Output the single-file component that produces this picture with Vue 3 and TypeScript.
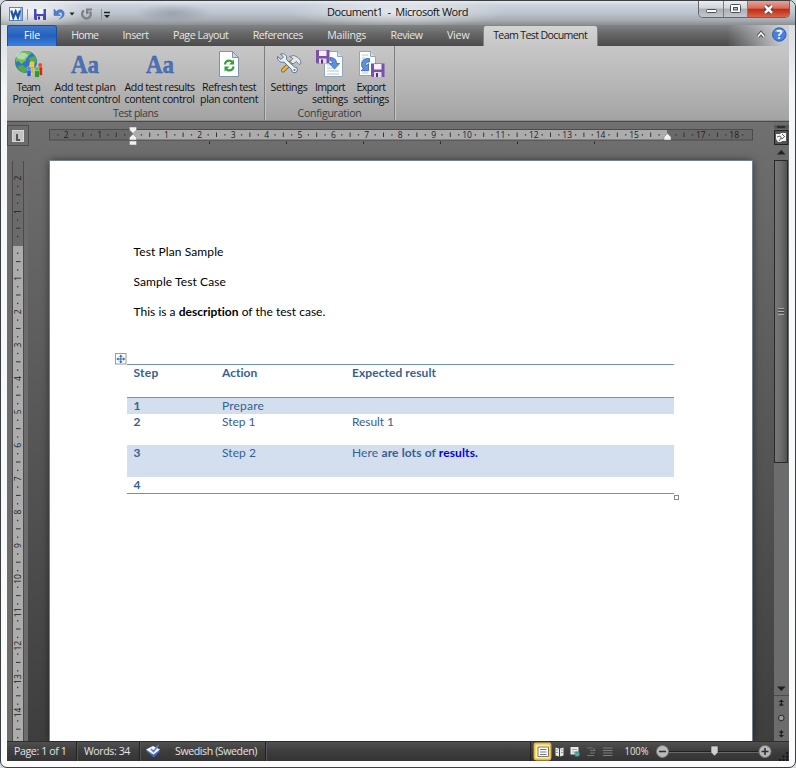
<template>
  <div class="window">
    <header class="title-bar">
      <svg class="quick" width="115" height="24" viewBox="0 0 115 24">
        <rect x="8.500" y="6.500" width="13" height="13" fill="#f6f9fd" stroke="#5d86bd" />
        <path d="M19 7h2v12h-2" fill="#8fb0dc" />
        <path d="M10.300 9.500 L12.300 16.500 L14.700 10.500 L17 16.500 L19 9.500" fill="none" stroke="#1c57a5" stroke-width="2.200" />
        <path d="M26.500 8v11M100.500 8v11" stroke="#8d9299" />
        <path d="M33 8h12v11h-11l-1-1z" fill="#4a48b8" />
        <path d="M35.500 8h7v5h-7z" fill="#f3f4ff" />
        <path d="M36 15h6v4h-6z" fill="#dfe1f5" />
        <path d="M37 15.500h2v3h-2z" fill="#33329a" />
        <path d="M53 8v6.500h6.500L57 12.200c2-1.800 4.200-.8 4.200 1.300 0 1.800-1 3-3 4.500 3.500-1 5-3 5-5.300 0-4-4.600-5.400-8-2.300z" fill="#4b7fd0" stroke="#3566b4" stroke-width=".5" />
        <path d="M68.500 11.500h5l-2.500 3z" fill="#222" />
        <path d="M83 9.500a4.300 4.300 0 1 0 6 1.200" fill="none" stroke="#7d8084" stroke-width="2.400" />
        <path d="M85 7.500h6v2h-3.500v3.500H85z" fill="#7d8084" />
        <path d="M103 11.500h6" stroke="#222" stroke-width="1.300" />
        <path d="M103 14h6l-3 3z" fill="#222" />
      </svg>
      <div class="caption"><span v-fit="141">Document1&nbsp; -&nbsp; Microsoft Word</span></div>
      <div class="controls">
        <span class="control">
          <svg width="24" height="16" viewBox="0 0 24 16"><rect x="7.500" y="8.500" width="10" height="3" rx="1" fill="#fff" stroke="#4c4f56" /></svg>
        </span>
        <span class="control">
          <svg width="23" height="16" viewBox="0 0 23 16">
            <rect x="6.500" y="3.500" width="10" height="8" rx="1" fill="#fff" stroke="#4c4f56" />
            <rect x="9.500" y="6.500" width="4" height="2.500" fill="#b4b8c0" stroke="#4c4f56" />
          </svg>
        </span>
        <span class="control close">
          <svg width="41" height="16" viewBox="0 0 41 16">
            <path d="M17.200 5l6.600 6.500M23.800 5l-6.600 6.500" stroke="#60454a" stroke-width="4.600" />
            <path d="M17 4.800l7 7M24 4.800l-7 7" stroke="#fff" stroke-width="2.500" />
          </svg>
        </span>
      </div>
    </header>

    <nav class="tabs">
      <a class="tab file"><span v-fit="16">File</span></a>
      <a v-for="tab in tabs" :key="tab.label" class="tab" :class="{ active: tab.active }">
        <span v-fit="tab.width">{{ tab.label }}</span>
      </a>
      <svg class="help" width="34" height="21" viewBox="0 0 34 21">
        <path d="M3 11.500L6 8l3 3.500" fill="none" stroke="#555" stroke-width="3.600" />
        <path d="M3 11.500L6 8l3 3.500" fill="none" stroke="#fff" stroke-width="1.600" />
        <circle cx="24.300" cy="9.500" r="6.700" fill="#4a80dc" stroke="#2d5cae" />
        <path d="M19 7a6 5 0 0 1 10.600 0q-5-2-10.600 0" fill="#8fb5f0" />
        <text x="24.300" y="14" text-anchor="middle" class="question">?</text>
      </svg>
    </nav>

    <section class="ribbon">
      <div class="group plans">
        <div class="buttons">
          <button class="team">
            <svg width="32" height="30" viewBox="12 49 32 30">
              <circle cx="26" cy="62" r="11" fill="#2e78c2" />
              <path d="M16.500 57q4-6 10-6l5 2-3 3-4 1 2 3-5 4-3-3-3 1z" fill="#70bd55" />
              <path d="M29 58l6-2 2 6-6 3zM18 66l5-1 4 4-2 4q-5-1-7-5z" fill="#58a845" />
              <ellipse cx="22" cy="56" rx="6" ry="3.500" fill="#fff" opacity=".45" />
              <g stroke="#fff" stroke-width=".3">
                <path d="M29.500 65h4.500v9h-4.500z" fill="#f0ad17" /><circle cx="32" cy="63.800" r="2.300" fill="#f7c331" />
                <path d="M38 66h4.500v9.500h-4.500z" fill="#cf2718" /><circle cx="40.200" cy="65" r="2.300" fill="#e64a32" />
                <path d="M27 69.500h4v7h-4z" fill="#2a5fd0" /><circle cx="29" cy="68.500" r="2.100" fill="#4d83e8" />
                <path d="M34.500 70h5v7.500h-5z" fill="#2f9c33" /><circle cx="37" cy="68.700" r="2.300" fill="#52c254" />
              </g>
            </svg>
            <span v-fit="23">Team</span><span v-fit="31">Project</span>
          </button>
          <button class="plan">
            <svg width="32" height="30" viewBox="0 0 32 30"><text x="2" y="23.500" class="aa" textLength="28" lengthAdjust="spacingAndGlyphs">Aa</text></svg>
            <span v-fit="61">Add test plan</span><span v-fit="70">content control</span>
          </button>
          <button class="results">
            <svg width="32" height="30" viewBox="0 0 32 30"><text x="2" y="23.500" class="aa" textLength="28" lengthAdjust="spacingAndGlyphs">Aa</text></svg>
            <span v-fit="70">Add test results</span><span v-fit="70">content control</span>
          </button>
          <button class="refresh">
            <svg width="32" height="30" viewBox="213 49 32 30">
              <path d="M219.500 51.500h13l6 6v19h-19z" fill="#fbfdff" stroke="#7e93ac" />
              <path d="M232.500 51.500v6h6z" fill="#c9d8e8" stroke="#7e93ac" />
              <path d="M225 64.500q.5-4 4.500-3.800 1.500 0 2.700 1.200M233.500 66.500q-.5 4-4.500 3.800-1.500 0-2.700-1.200" fill="none" stroke="#38a03a" stroke-width="2.200" />
              <path d="M234 59.500v5h-5zM224.500 71.500v-5h5z" fill="#38a03a" />
            </svg>
            <span v-fit="54">Refresh test</span><span v-fit="58">plan content</span>
          </button>
        </div>
        <div class="group-label"><span v-fit="45">Test plans</span></div>
      </div>
      <div class="group config">
        <div class="buttons">
          <button>
            <svg width="32" height="30" viewBox="273 49 32 30">
              <path d="M283 70.500l8.500-8.500" stroke="#8c6519" stroke-width="4" stroke-linecap="round" />
              <path d="M283 70.500l8-8" stroke="#f0bd45" stroke-width="2.400" stroke-linecap="round" />
              <path d="M290 61.500l3-3-3.500-2q4.500-2.500 8.500 1l2.500 3 .5 3-2 1-2.500-3-3.500 2.500z" fill="#e4e9ef" stroke="#5d6b7b" stroke-width=".8" />
              <path d="M277.500 56.500l3.500 3 2.500-2.500-3-3c4-1 7 1.500 6 5.500l8 7.500q3 0 3 3-.5 3-3.500 2.800-2.500-.3-2.500-3.300l-7.500-7.500c-3.500 1-7-1.500-6.500-5.500z" fill="#e9f0f7" stroke="#4f6a8a" stroke-width=".9" />
              <circle cx="294.500" cy="70" r="1" fill="#4f6a8a" />
            </svg>
            <span v-fit="37">Settings</span>
          </button>
          <button>
            <svg width="32" height="30" viewBox="314 49 32 30">
              <path d="M324.500 51.500h13l5 5v20h-18z" fill="#fbfdff" stroke="#91a6bd" />
              <path d="M337.500 51.500v5h5" fill="#d2dfec" stroke="#91a6bd" />
              <path d="M327 65h5M327 68h6M327 71h12M327 74h12" stroke="#b9c6d5" />
              <path d="M316 50h13.500v13.500h-12.500l-1-1z" fill="#7951a8" />
              <path d="M319 50.500h7.500v5.500h-7.500z" fill="#f4effa" />
              <path d="M319 58.500h7.500v5h-7.500z" fill="#e4dbf0" /><path d="M321 59.500h2v4h-2z" fill="#55317f" />
              <path d="M330 57.500q6.500 0 6.500 6h3l-5 5.500-5-5.500h3.200q0-3-2.700-3z" fill="#5891e4" stroke="#2e61b5" stroke-width=".8" />
            </svg>
            <span v-fit="30">Import</span><span v-fit="36">settings</span>
          </button>
          <button>
            <svg width="32" height="30" viewBox="354 49 32 30">
              <path d="M358.500 51.500h11l5 5v19h-16z" fill="#fbfdff" stroke="#91a6bd" />
              <path d="M369.500 51.500v5h5" fill="#d2dfec" stroke="#91a6bd" />
              <path d="M361 55h6M361 58h3M361 73h6" stroke="#b9c6d5" />
              <path d="M368.500 58.500q-8-.5-8 6 0 2.500 1.700 4l-2 2.200h7.300v-7l-2.200 2.100q-2.300-3.600 3.200-3.800z" fill="#5891e4" stroke="#2e61b5" stroke-width=".8" />
              <path d="M370 63.500h13.500v13.500h-12.500l-1-1z" fill="#7951a8" />
              <path d="M373 64h7.500v5.500h-7.500z" fill="#f4effa" />
              <path d="M373 72h7.500v5h-7.500z" fill="#e4dbf0" /><path d="M375 73h2v4h-2z" fill="#55317f" />
            </svg>
            <span v-fit="29">Export</span><span v-fit="36">settings</span>
          </button>
        </div>
        <div class="group-label"><span v-fit="64">Configuration</span></div>
      </div>
    </section>

    <main class="workspace">
      <div class="left-strip">
        <div class="corner"><i></i></div>
        <svg width="21" height="580" viewBox="7 161 21 580">
          <rect x="12.500" y="160.500" width="11" height="590" fill="#6b6b6b" stroke="#4b4b4b" />
          <rect x="13" y="246" width="10" height="500" fill="#acacac" />
          <g v-for="m in verticalMarks" :key="m.at">
            <text v-if="m.kind === 'number'" class="num" text-anchor="middle" :transform="`translate(21.200 ${m.at}) rotate(-90)`">{{ m.label }}</text>
            <rect v-else-if="m.kind === 'half'" x="16" :y="m.at - 0.500" width="4.500" height="1" fill="#333" />
            <rect v-else x="17" :y="m.at - 0.600" width="1.300" height="1.300" fill="#333" />
          </g>
        </svg>
      </div>

      <div class="canvas">
        <svg width="746" height="39" viewBox="28 122 746 39">
          <rect x="49.500" y="129.500" width="703" height="10.500" fill="#696969" stroke="#4b4b4b" />
          <rect x="133" y="130" width="534" height="9.500" fill="#acacac" />
          <g v-for="m in horizontalMarks" :key="m.at">
            <text v-if="m.kind === 'number'" class="num" text-anchor="middle" :x="m.at" y="138">{{ m.label }}</text>
            <rect v-else-if="m.kind === 'half'" :x="m.at - 0.500" y="132.500" width="1" height="4.500" fill="#333" />
            <rect v-else :x="m.at - 0.600" y="134.200" width="1.300" height="1.300" fill="#333" />
          </g>
          <rect v-for="n in 6" :key="n" :x="132 + n * 77" y="141.500" width="1" height="2.500" fill="#2b2b2b" />
          <g fill="#f1f1f1" stroke="#777" stroke-width=".5">
            <path d="M129.500 127h7v3l-3.500 3.500-3.500-3.500z" />
            <path d="M133 134l3.500 3.500v2.500h-7v-2.500z" />
            <path d="M129.500 141h7v4h-7z" />
            <path d="M667.500 133.500l3.500 3.500v3h-7v-3z" />
          </g>
        </svg>

        <article class="page">
          <p><span v-fit="90">Test Plan Sample</span></p>
          <p><span v-fit="92.500">Sample Test Case</span></p>
          <p><span v-fit="192">This is a <b>description</b> of the test case.</span></p>
          <div class="table-wrap">
            <svg class="move" width="12" height="12" viewBox="0 0 12 12">
              <rect x=".5" y=".5" width="10.500" height="10.500" fill="#fff" stroke="#9a9a9a" />
              <path d="M5.800 3v6M2.800 6h6" stroke="#3563b8" />
              <path d="M5.800 1.500L7.600 3.700H4zM5.800 10.500L7.600 8.300H4zM1.300 6l2.200-1.800v3.600zM10.300 6L8.100 4.200v3.600z" fill="#3563b8" />
            </svg>
            <table>
              <thead>
                <tr>
                  <th><span v-fit="25">Step</span></th>
                  <th><span v-fit="35.500">Action</span></th>
                  <th><span v-fit="84">Expected result</span></th>
                </tr>
              </thead>
              <tbody>
                <tr v-for="row in rows" :key="row.step" :class="row.size">
                  <th>{{ row.step }}</th>
                  <td><span v-if="row.action" v-fit="row.actionWidth">{{ row.action }}</span></td>
                  <td>
                    <span v-if="row.result" v-fit="42">{{ row.result }}</span>
                    <span v-if="row.step === 3" v-fit="126">Here <b>are lots of <em>results.</em></b></span>
                  </td>
                </tr>
              </tbody>
            </table>
            <i class="resize"></i>
          </div>
        </article>
      </div>

      <aside class="scroll">
        <svg width="15" height="38" viewBox="774 122 15 38">
          <rect x="774.500" y="125" width="14" height="4" fill="#555" />
          <path d="M777 127h8" stroke="#222" stroke-width="1.500" />
          <rect x="774.500" y="130.500" width="13.500" height="14" fill="#555" stroke="#222" />
          <path d="M776 134h4l1-1h5v8h-4l-1 1h-3l-2-3z" fill="#f4f4f4" />
          <path d="M777 137l3-1 2 3 3-3M779 141l2-3M782 134l2 2" stroke="#6c6268" fill="none" />
          <path d="M777 154.500l4.300-4.500 4.300 4.500z" fill="#222" />
        </svg>
        <div class="thumb"><i></i></div>
        <svg class="scroll-end" width="15" height="61" viewBox="774 680 15 61">
          <path d="M777 686.500h8.500l-4.200 4.500z" fill="#1f1f1f" />
          <path d="M774 695.500h15" stroke="#4b4b4b" />
          <path d="M778.500 702l2.800-2.500 2.800 2.500zM778.500 705.500l2.800-2.500 2.800 2.500zM778.500 731.500h5.600l-2.800 2.500zM778.500 735h5.600l-2.800 2.500z" fill="#1f1f1f" />
          <path d="M781.300 701v5M781.300 730v5" stroke="#1f1f1f" />
          <circle cx="781.300" cy="718" r="2.800" fill="#999" stroke="#2a2a2a" />
        </svg>
      </aside>
    </main>

    <footer class="status">
      <div class="cell page-no"><span v-fit="52.500">Page: 1 of 1</span></div>
      <div class="cell words"><span v-fit="46">Words: 34</span></div>
      <div class="cell language">
        <svg width="16" height="16" viewBox="147 743 16 16">
          <path d="M146 751l6-3.500 8 3.500-6 6.500z" fill="#3f68c9" />
          <path d="M146 749.500l7-3.500 7 3.500-6.500 5z" fill="#f5f7fc" />
          <path d="M151 749l2.500 2.500 5-6.500" fill="none" stroke="#4d7de0" stroke-width="1.600" />
        </svg>
        <span v-fit="82">Swedish (Sweden)</span>
      </div>
      <div class="views">
        <svg width="258" height="20" viewBox="531 742 258 20">
          <rect x="534.500" y="743.500" width="16" height="16" rx="1.500" fill="#fff0a8" stroke="#e8b93a" stroke-width="1.800" />
          <path d="M538 747h10.500v9.500H538z" fill="#fff" stroke="#777" />
          <path d="M540 749.500h6.500M540 752h6.500M540 754.500h6.500" stroke="#777" />
          <path d="M555.500 747.500l3.500 1v8l-3.500-1zM563.500 747.500l-3.500 1v8l3.500-1z" fill="#e8e8e8" />
          <path d="M556 750h2M556 752.500h2M561 750h2M561 752.500h2" stroke="#888" stroke-width=".8" />
          <path d="M570.500 747h8v7.500h-8z" fill="#e8e8e8" /><path d="M572 749.500h5M572 752h4" stroke="#aaa" />
          <circle cx="577" cy="754" r="2.700" fill="#3a97ba" /><path d="M575 753l2 2 2-1" stroke="#7cc465" fill="none" />
          <path d="M587 748h5M590 750.500h5M590 753h5M587 755.500h7M592.500 748l3 2" stroke="#757575" fill="none" />
          <path d="M603 748h9.500M603 750.500h9.500M603 753h9.500M603 755.500h9.500" stroke="#7d7d7d" />
          <text x="624.500" y="755" class="zoom-text" textLength="24" lengthAdjust="spacingAndGlyphs">100%</text>
          <path d="M669 751.500h90" stroke="#202020" /><path d="M669 752.500h90" stroke="#686868" />
          <path d="M711 746h7v6.500l-3.500 3.500-3.500-3.500z" fill="#d0d0d0" stroke="#333" stroke-width=".6" />
          <circle cx="662.500" cy="751.500" r="6" fill="#b9b9b9" stroke="#777" />
          <circle cx="765" cy="751.500" r="6" fill="#b9b9b9" stroke="#777" />
          <path d="M659 751.500h7M761.500 751.500h7M765 748v7" stroke="#2d2d2d" stroke-width="1.600" />
          <path d="M786 752h2v2h-2zM786 755.500h2v2h-2zM786 759h2v2h-2zM782.500 755.500h2v2h-2zM782.500 759h2v2h-2zM779 759h2v2h-2z" fill="#171717" />
        </svg>
      </div>
    </footer>
  </div>
</template>

<script setup lang="ts">
type Tab = { label: string, width: number, active?: boolean }

type Row = {
  step: number,
  action?: string,
  actionWidth?: number,
  result?: string,
  size?: "tall" | "taller"
}

type Mark = { at: number, kind: "number" | "half" | "quarter", label: string }

// Spreads or tightens a label's letters so that it takes the given width.
const vFit = {
  mounted(el: HTMLElement, { value }: { value: number }) {
    const natural = el.getBoundingClientRect().width
    const count = (el.textContent ?? "").length
    el.style.letterSpacing = `${(value - natural) / count}px`
  }
}

const tabs: Tab[] = [
  { label: "Home", width: 27 },
  { label: "Insert", width: 26 },
  { label: "Page Layout", width: 55.500 },
  { label: "References", width: 50 },
  { label: "Mailings", width: 39 },
  { label: "Review", width: 32 },
  { label: "View", width: 22.500 },
  { label: "Team Test Document", width: 94, active: true }
]

const rows: Row[] = [
  { step: 1, action: "Prepare", actionWidth: 42 },
  { step: 2, action: "Step 1", actionWidth: 33.500, result: "Result 1", size: "tall" },
  { step: 3, action: "Step 2", actionWidth: 34, size: "taller" },
  { step: 4 }
]

// One centimetre of the ruler, split in quarters.
const CM = 33.4

function marks(origin: number, from: number, to: number, skip: number[]): Mark[] {
  const list: Mark[] = []
  for (let q = from; q <= to; q++) {
    if (skip.includes(q)) continue
    const rest = Math.abs(q) % 4
    list.push({
      at: origin + q * CM / 4,
      kind: rest === 0 ? "number" : rest === 2 ? "half" : "quarter",
      label: String(Math.abs(q) / 4)
    })
  }
  return list
}

const horizontalMarks = marks(133, -9, 73, [0, 64])
const verticalMarks = marks(244.900, -8, 59, [0])
</script>

<style>
body {
  background: #d5dade;
  overflow: hidden;
}
</style>

<style scoped>
* {
  box-sizing: border-box;
}

.window {
  width: 796px;
  height: 768px;
  display: flex;
  flex-direction: column;
  padding: 0 6px 6px;
  border: 1px solid #3b3e42;
  border-radius: 7px;
  overflow: hidden;
  background: linear-gradient(#dfe4ea 0, #d9dee5 25px, #f4f6f8 90px, #fbfbfb 100%);
  font: 10.6px/12px "Open Sans", "Noto Sans", sans-serif;
  color: #1e1e1e;
}

span {
  display: inline-block;
  white-space: nowrap;
}

svg {
  display: block;
  flex: none;
}

.title-bar {
  height: 24px;
  flex: none;
  display: flex;
  margin: 0 -6px;
  padding: 0 5px 0 0;
  background:
    radial-gradient(ellipse 38px 9px at 172px 12px, rgba(105, 115, 130, .4), transparent),
    radial-gradient(ellipse 110px 16px at 396px 11px, rgba(255, 255, 255, .6), transparent),
    radial-gradient(ellipse 60px 20px at 30px 11px, rgba(255, 255, 255, .8), transparent),
    linear-gradient(#e5e9ee 0, #cbd2dc 4px, #bcc4ce 12px, #a7adb3 19px, #8c8f92 24px);
}

.caption {
  flex: 1;
  padding: 5px 0 0 211px;
  font-size: 11px;
  color: #111;
}

.controls {
  display: flex;
  height: 17px;
  border: 1px solid #62666e;
  border-top: 0;
  border-radius: 0 0 5px 5px;
  overflow: hidden;
}

.control {
  background: linear-gradient(#eceef1, #d0d3d8 45%, #aaaeb5 50%, #c4c8ce);
  border-right: 1px solid #777b82;
}

.control.close {
  border: 0;
  background: linear-gradient(#e8a498, #d66a58 45%, #bd2d15 52%, #d9634a);
}

.tabs {
  height: 21px;
  flex: none;
  display: flex;
  background: linear-gradient(90deg, transparent 720px, rgba(225, 228, 232, .8) 775px), linear-gradient(#818385, #666 9px, #4b4b4b);
}

.tab {
  display: flex;
  justify-content: center;
  padding: 4px 12.2px 0;
  color: #e6e6e6;
}

.tab.file {
  width: 50px;
  margin-right: 2px;
  color: #fff;
  background: linear-gradient(#3f78c9, #2360bd 50%, #3b80df);
  border: 1px solid #1c4f9d;
  border-bottom: 0;
  border-radius: 3px 3px 0 0;
  padding-top: 3px;
}

.tab.active {
  width: 115px;
  padding: 3px 0 0;
  margin-left: 1px;
  color: #1c1c1c;
  background: linear-gradient(#d4d4d4, #c6c6c6);
  border: 1px solid #858585;
  border-bottom: 0;
  border-radius: 3px 3px 0 0;
}

.help {
  margin-left: auto;
}

.question {
  font: bold 12px "Open Sans", sans-serif;
  fill: #fff;
}

.ribbon {
  height: 75px;
  flex: none;
  display: flex;
  background: linear-gradient(#c7c7c7, #b5b5b5 55%, #a3a3a3);
  border-bottom: 1px solid #8d8d8d;
}

.group {
  display: flex;
  flex-direction: column;
  justify-content: space-between;
  border-right: 1px solid #7e7e7e;
  box-shadow: 1px 0 #c4c4c4;
}

.plans {
  width: 258px;
}

.config {
  width: 130px;
}

.buttons {
  display: flex;
  padding-left: .6px;
}

.config .buttons {
  padding-left: 3.5px;
}

button {
  width: 41px;
  height: 61px;
  padding: 3px 0 0;
  display: flex;
  flex-direction: column;
  align-items: center;
  flex: none;
  border: 0;
  background: none;
  font: inherit;
  color: #111;
}

button svg {
  margin-bottom: 2px;
}

.plan {
  width: 73px;
}

.results {
  width: 76px;
}

.refresh {
  width: 63px;
}

.aa {
  font: bold 25px "Liberation Serif", serif;
  fill: #4c72b5;
  stroke: #3a5a99;
  stroke-width: .4px;
}

.group-label {
  height: 13px;
  text-align: center;
  color: #3c3c3c;
}

.workspace {
  height: 620px;
  flex: none;
  display: flex;
  border-top: 1px solid #4a4a4a;
  background: linear-gradient(#707070, #6c6c6c 40px, #575757 300px, #3e3e3e);
}

.left-strip,
.scroll {
  background: #6c6c6c;
}

.left-strip {
  width: 21px;
}

.corner {
  display: flex;
  align-items: center;
  justify-content: center;
  width: 22px;
  height: 21px;
  margin: 3px 0 15px;
  border: 1px solid #4c4c4c;
}

.corner i {
  width: 12px;
  height: 12px;
  background: #c3c3c3;
  border: 1px solid #d8d8d8;
  display: flex;
  padding: 3px 3px;
}

.corner i::before {
  content: "";
  width: 5px;
  height: 5px;
  border: solid #555;
  border-width: 0 0 2px 2px;
}

.num {
  font: 8.5px "Open Sans", sans-serif;
  fill: #1c1c1c;
}

.canvas {
  width: 746px;
}

.page {
  width: 702px;
  height: 580px;
  margin-left: 22px;
  padding: 83px 77px 0 83.5px;
  background: #fff;
  box-shadow: 0 0 0 1px #73828f, 0 0 8px rgba(0, 0, 0, .6);
  font: 12px/15px Lato, sans-serif;
  color: #000;
  clip-path: inset(-10px -10px 0 -10px);
}

.page p {
  height: 15px;
  margin: 0 0 15px;
}

.table-wrap {
  position: relative;
  width: 547px;
  margin: 45px 0 0 -6.5px;
}

table {
  width: 547px;
  table-layout: fixed;
  border-collapse: separate;
  border-spacing: 0;
  border-top: 1px solid #6791c7;
  border-bottom: 1px solid #6791c7;
  color: #376092;
}

th,
td {
  height: 16px;
  padding: 0 0 0 6.5px;
  text-align: left;
  vertical-align: top;
  line-height: 16px;
}

th:first-child {
  width: 88.5px;
}

th:nth-child(2) {
  width: 130px;
}

thead th {
  height: 33px;
  border-bottom: 1px solid #6791c7;
}

.tall > * {
  height: 31px;
}

.taller > * {
  height: 32px;
}

tbody tr:nth-child(odd) {
  background: #d3dfee;
}

em {
  font-style: normal;
  color: #0000f0;
}

.move {
  position: absolute;
  left: -12px;
  top: -11px;
}

.resize {
  position: absolute;
  right: -5px;
  bottom: -6px;
  width: 5px;
  height: 5px;
  background: #fff;
  border: 1px solid #888;
}

.scroll {
  width: 15px;
  display: flex;
  flex-direction: column;
}

.thumb {
  width: 14px;
  height: 303px;
  display: flex;
  align-items: center;
  justify-content: center;
  border: 1px solid #292929;
  background: linear-gradient(90deg, #777, #6c6c6c 50%, #525252);
}

.thumb i {
  width: 6px;
  height: 7px;
  background: repeating-linear-gradient(#aaa 0 1px, #444 1px 2px, transparent 2px 3px);
}

.scroll-end {
  margin-top: auto;
}

.status {
  height: 20px;
  flex: none;
  display: flex;
  border-top: 1px solid #2d2d2d;
  background: linear-gradient(#505050, #3e3e3e 45%, #343434);
  color: #e4e4e4;
}

.cell {
  display: flex;
  padding: 3px 0 0 7px;
  border-right: 1px solid #222;
  box-shadow: 1px 0 #555;
}

.page-no {
  width: 70px;
}

.words {
  width: 63px;
}

.language {
  width: 126px;
  gap: 12px;
}

.language svg {
  margin-top: -2px;
  overflow: visible;
}

.views {
  margin-left: auto;
  border-left: 1px solid #222;
}

.zoom-text {
  font: 10.6px "Open Sans", sans-serif;
  fill: #e4e4e4;
}
</style>
